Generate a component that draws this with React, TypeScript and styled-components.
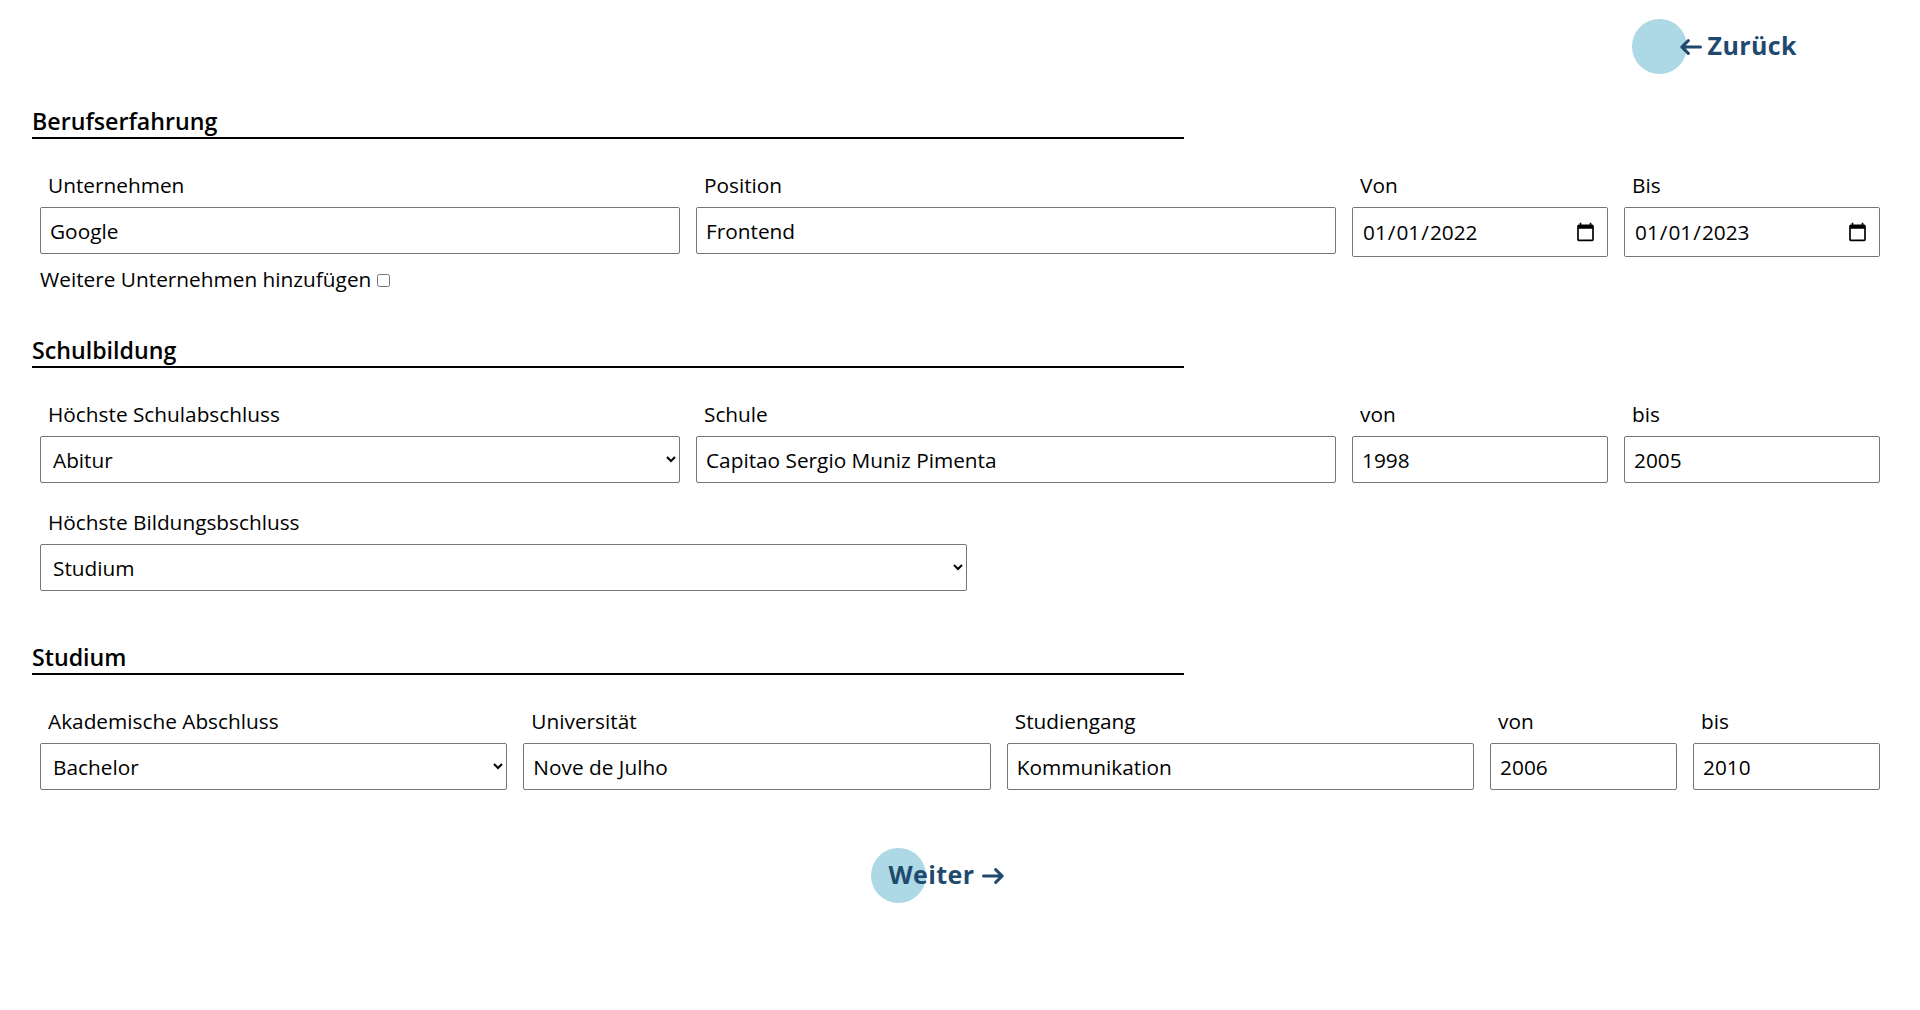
import React from "react";
import styled, { createGlobalStyle } from "styled-components";

const GlobalStyle = createGlobalStyle`
  body {
    margin: 0;
    background: #fff;
    color: #000;
    font-family: "Open Sans", "Liberation Sans", sans-serif;
  }
`;

const Arrow: React.FC<{ dir: "left" | "right" }> = ({ dir }) => (
  <svg
    width="22"
    height="16"
    viewBox="0 0 22 16"
    fill="none"
    stroke="currentColor"
    strokeWidth="3"
    strokeLinecap="round"
    strokeLinejoin="round"
    style={dir === "right" ? { transform: "scaleX(-1)" } : undefined}
  >
    <path d="M20.5 8H1.8M8.3 1.6L1.8 8l6.5 6.4" />
  </svg>
);

const App: React.FC = () => {
  return (
    <>
      <GlobalStyle />
      <Page>
        <TopBar>
          <NavButton type="button">
            <Arrow dir="left" />
            <ButtonText $lift={2}>Zurück</ButtonText>
          </NavButton>
        </TopBar>

        <SectionTitle $gap={32}>Berufserfahrung</SectionTitle>
        <FieldRow $cols="5fr 5fr 2fr 2fr">
          <Field>
            <Label>Unternehmen</Label>
            <TextInput defaultValue="Google" />
          </Field>
          <Field>
            <Label>Position</Label>
            <TextInput defaultValue="Frontend" />
          </Field>
          <Field>
            <Label>Von</Label>
            <DateInput type="date" defaultValue="2022-01-01" />
          </Field>
          <Field>
            <Label>Bis</Label>
            <DateInput type="date" defaultValue="2023-01-01" />
          </Field>
        </FieldRow>
        <CheckLine>
          Weitere Unternehmen hinzufügen <input type="checkbox" />
        </CheckLine>

        <SectionTitle $gap={43}>Schulbildung</SectionTitle>
        <FieldRow $cols="5fr 5fr 2fr 2fr">
          <Field>
            <Label>Höchste Schulabschluss</Label>
            <Select defaultValue="Abitur">
              <option>Abitur</option>
              <option>Realschulabschluss</option>
              <option>Hauptschulabschluss</option>
            </Select>
          </Field>
          <Field>
            <Label>Schule</Label>
            <TextInput defaultValue="Capitao Sergio Muniz Pimenta" />
          </Field>
          <Field>
            <Label>von</Label>
            <TextInput defaultValue="1998" />
          </Field>
          <Field>
            <Label>bis</Label>
            <TextInput defaultValue="2005" />
          </Field>
        </FieldRow>
        <FieldRow $cols="927px" $gap={26}>
          <Field>
            <Label>Höchste Bildungsbschluss</Label>
            <Select defaultValue="Studium">
              <option>Studium</option>
              <option>Ausbildung</option>
              <option>Keine</option>
            </Select>
          </Field>
        </FieldRow>

        <SectionTitle $gap={51}>Studium</SectionTitle>
        <FieldRow $cols="5fr 5fr 5fr 2fr 2fr">
          <Field>
            <Label>Akademische Abschluss</Label>
            <Select defaultValue="Bachelor">
              <option>Bachelor</option>
              <option>Master</option>
              <option>Promotion</option>
            </Select>
          </Field>
          <Field>
            <Label>Universität</Label>
            <TextInput defaultValue="Nove de Julho" />
          </Field>
          <Field>
            <Label>Studiengang</Label>
            <TextInput defaultValue="Kommunikation" />
          </Field>
          <Field>
            <Label>von</Label>
            <TextInput defaultValue="2006" />
          </Field>
          <Field>
            <Label>bis</Label>
            <TextInput defaultValue="2010" />
          </Field>
        </FieldRow>

        <BottomBar>
          <NavButton type="button" $next>
            <ButtonText $lift={2}>Weiter</ButtonText>
            <Arrow dir="right" />
          </NavButton>
        </BottomBar>
      </Page>
    </>
  );
};

const Page = styled.div`
  padding: 0 32px 100px;
`;

const TopBar = styled.div`
  display: flex;
  justify-content: flex-end;
  padding: 19px 91px 0 0;
`;

const BottomBar = styled.div`
  display: flex;
  justify-content: center;
  margin-top: 58px;
  padding-right: 45px;
`;

const NavButton = styled.button<{ $next?: boolean }>`
  position: relative;
  isolation: isolate;
  display: inline-flex;
  align-items: center;
  gap: ${(p) => (p.$next ? "8px" : "6px")};
  height: 55px;
  padding: 0 0 0 ${(p) => (p.$next ? "18px" : "48px")};
  border: 0;
  background: none;
  color: #1f4a6e;
  font-family: "Open Sans", "Liberation Sans", sans-serif;
  font-size: 25px;
  font-weight: 700;
  letter-spacing: 0.4px;
  cursor: pointer;

  &::before {
    content: "";
    position: absolute;
    left: 0;
    top: 0;
    width: 55px;
    height: 55px;
    border-radius: 50%;
    background: #add8e6;
    z-index: -1;
  }
`;

const ButtonText = styled.span<{ $lift: number }>`
  transform: translateY(-${(p) => p.$lift}px);
`;

const SectionTitle = styled.h2<{ $gap?: number }>`
  width: 60vw;
  margin: ${(p) => p.$gap ?? 31}px 0 0;
  padding-bottom: 1px;
  border-bottom: 2px solid #000;
  font-size: 23.2px;
  font-weight: 600;
  line-height: 30px;
`;

const FieldRow = styled.div<{ $cols: string; $gap?: number }>`
  display: grid;
  grid-template-columns: ${(p) => p.$cols};
  gap: 16px;
  align-items: start;
  margin: ${(p) => p.$gap ?? 33}px 8px 0;
`;

const Field = styled.div`
  display: flex;
  flex-direction: column;
  min-width: 0;
`;

const Label = styled.label`
  padding-left: 8px;
  margin-bottom: 9px;
  font-size: 20.8px;
  line-height: 26px;
`;

const TextInput = styled.input`
  box-sizing: border-box;
  width: 100%;
  height: 47px;
  padding: 0 9px;
  border: 1px solid #767676;
  border-radius: 2px;
  background: #fff;
  color: #000;
  font-family: inherit;
  font-size: 20.8px;
`;

const DateInput = styled(TextInput)`
  height: 50px;
`;

const Select = styled.select`
  box-sizing: border-box;
  width: 100%;
  height: 47px;
  padding: 0 8px;
  border: 1px solid #767676;
  border-radius: 2px;
  background: #fff;
  color: #000;
  font-family: inherit;
  font-size: 20.8px;
`;

const CheckLine = styled.label`
  display: flex;
  align-items: center;
  gap: 2px;
  margin: 9px 8px 0;
  font-size: 20.8px;
  line-height: 26px;

  input {
    margin: 2px 0 0 4px;
  }
`;

export default App;
